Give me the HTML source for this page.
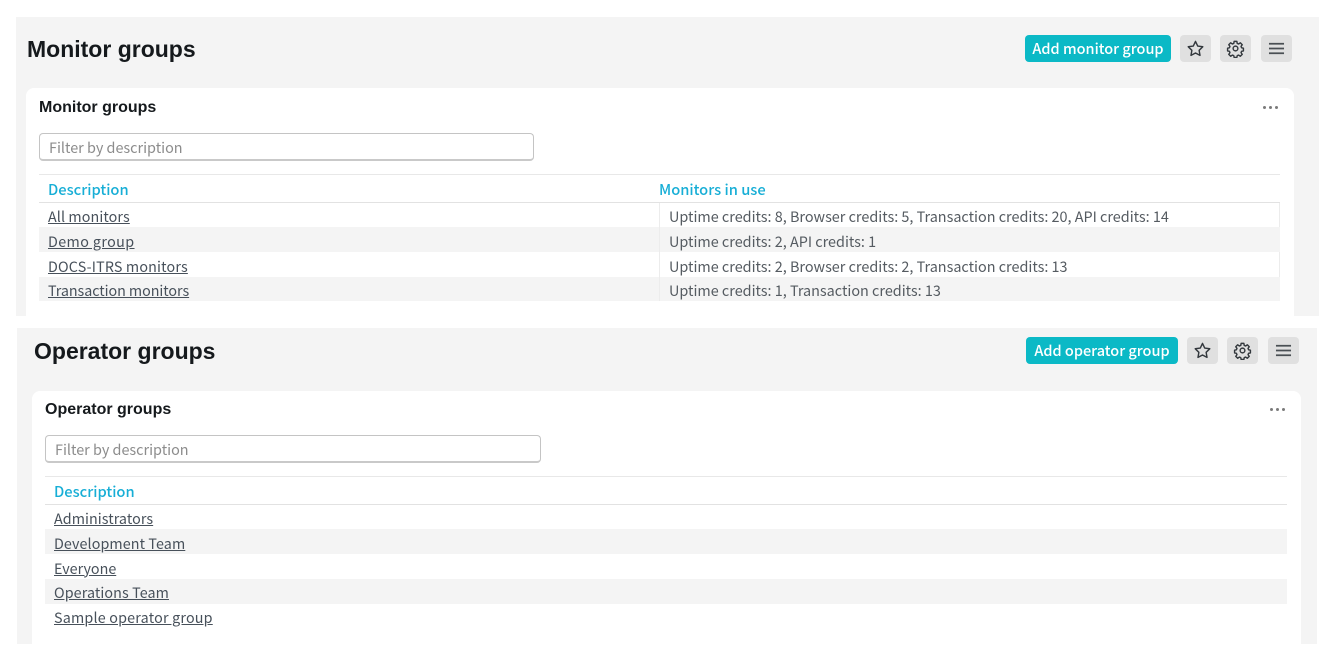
<!DOCTYPE html>
<html><head><meta charset="utf-8"><style>
html,body{margin:0;padding:0;background:#fff}
body{width:1336px;height:661px;position:relative;overflow:hidden;font-family:"Noto Sans CJK JP","Liberation Sans",sans-serif}
div,a,span{position:absolute;white-space:nowrap}
.panel{background:#f4f4f4}
.card{background:#fff;border-radius:8px 8px 0 0}
h1,h2{position:absolute;margin:0;font-family:"Liberation Sans",sans-serif;font-weight:700;color:#15191c;white-space:nowrap}
h1{font-size:23px;line-height:30px}
h2{font-size:16px;line-height:20px}
.add{background:#0bb9c6;color:#fff;border-radius:4px;height:27px;line-height:27px;text-align:center;font-size:14.5px;font-weight:500}
.ib{background:#e0e0e0;border-radius:4px;width:31px;height:27px}
.ib svg{position:absolute;left:6px;top:4px}
.filter{box-sizing:border-box;height:28px;width:496px;background:#fff;border:1px solid #c4c4c4;border-bottom:2px solid #c9c9c9;border-radius:4px;color:#8c8c8c;font-size:14.4px;line-height:27px;padding-left:9px}
.line{height:1px;background:#e8e8e8}
.th{color:#17aed6;font-size:14.7px;line-height:20px;font-weight:500}
.row{height:25px}
.sh{background:#f4f4f4}
a{color:#47505a;text-decoration:underline;font-size:14.3px;line-height:20px}
.t{color:#555b61;font-size:14.4px;line-height:20px}
.dots{width:16px;height:4px}
.dots i{position:absolute;top:0;width:3px;height:3px;border-radius:50%;background:#7a7a7a}
</style></head><body>

<div class="panel" style="left:16px;top:17px;width:1303px;height:299px"></div>
<div class="card" style="left:26px;top:88px;width:1268px;height:228px"></div>
<h1 style="left:27px;top:34px">Monitor groups</h1>
<div class="add" style="left:1025px;top:35px;width:146px">Add monitor group</div>
<div class="ib" style="left:1180px;top:35px"><svg width="19" height="19" viewBox="0 0 24 24" fill="none" stroke="#33383d" stroke-width="1.8" stroke-linejoin="round"><path d="M12 3l2.8 5.9 6.4.9-4.6 4.5 1.1 6.4L12 17.7l-5.7 3 1.1-6.4-4.6-4.5 6.4-.9z"/></svg></div>
<div class="ib" style="left:1220px;top:35px"><svg width="19" height="19" viewBox="0 0 24 24" fill="none" stroke="#33383d" stroke-width="1.8" stroke-linejoin="round"><circle cx="12" cy="12" r="3"/><path d="M10.3 3h3.4l.5 2.6 1.7.7 2.2-1.5 2.4 2.4-1.5 2.2.7 1.7 2.3.5v3.4l-2.3.5-.7 1.7 1.5 2.2-2.4 2.4-2.2-1.5-1.7.7-.5 2.3h-3.4l-.5-2.3-1.7-.7-2.2 1.5-2.4-2.4 1.5-2.2-.7-1.7-2.3-.5v-3.4l2.3-.5.7-1.7-1.5-2.2 2.4-2.4 2.2 1.5 1.7-.7z"/></svg></div>
<div class="ib" style="left:1261px;top:35px"><svg width="19" height="19" viewBox="0 0 24 24" fill="none" stroke="#4a4f54" stroke-width="2.2"><path d="M2.5 6h19M2.5 12h19M2.5 18h19"/></svg></div>
<h2 style="left:39px;top:98px">Monitor groups</h2>
<div class="dots" style="left:1263px;top:106px"><i style="left:0"></i><i style="left:6px"></i><i style="left:12px"></i></div>
<div class="filter" style="left:39px;top:133px;width:495px">Filter by description</div>
<div class="line" style="left:39px;top:174px;width:1241px"></div>
<div class="th" style="left:48px;top:180px">Description</div>
<div class="th" style="left:659px;top:180px">Monitors in use</div>
<div class="line" style="left:39px;top:202px;width:1241px;background:#e2e2e2"></div>
<div class="row sh" style="left:39px;top:227px;width:1241px"></div>
<div class="row sh" style="left:39px;top:277px;width:1241px;height:24px"></div>
<div style="left:659px;top:203px;width:1px;height:98px;background:#ececec"></div>
<div style="left:1279px;top:203px;width:1px;height:24px;background:#ececec"></div>
<div style="left:1279px;top:252px;width:1px;height:25px;background:#ececec"></div>
<a style="left:48px;top:207px;letter-spacing:.1px">All monitors</a>
<a style="left:48px;top:232px;letter-spacing:.4px">Demo group</a>
<a style="left:48px;top:257px;letter-spacing:.17px">DOCS-ITRS monitors</a>
<a style="left:48px;top:281px;letter-spacing:-.05px">Transaction monitors</a>
<div class="t" style="left:669px;top:207px">Uptime credits: 8, Browser credits: 5, Transaction credits: 20, API credits: 14</div>
<div class="t" style="left:669px;top:232px">Uptime credits: 2, API credits: 1</div>
<div class="t" style="left:669px;top:257px">Uptime credits: 2, Browser credits: 2, Transaction credits: 13</div>
<div class="t" style="left:669px;top:281px">Uptime credits: 1, Transaction credits: 13</div>

<div class="panel" style="left:17px;top:328px;width:1300px;height:316px"></div>
<div class="card" style="left:32px;top:391px;width:1269px;height:253px"></div>
<h1 style="left:34px;top:336px">Operator groups</h1>
<div class="add" style="left:1026px;top:337px;width:152px">Add operator group</div>
<div class="ib" style="left:1187px;top:337px"><svg width="19" height="19" viewBox="0 0 24 24" fill="none" stroke="#33383d" stroke-width="1.8" stroke-linejoin="round"><path d="M12 3l2.8 5.9 6.4.9-4.6 4.5 1.1 6.4L12 17.7l-5.7 3 1.1-6.4-4.6-4.5 6.4-.9z"/></svg></div>
<div class="ib" style="left:1227px;top:337px"><svg width="19" height="19" viewBox="0 0 24 24" fill="none" stroke="#33383d" stroke-width="1.8" stroke-linejoin="round"><circle cx="12" cy="12" r="3"/><path d="M10.3 3h3.4l.5 2.6 1.7.7 2.2-1.5 2.4 2.4-1.5 2.2.7 1.7 2.3.5v3.4l-2.3.5-.7 1.7 1.5 2.2-2.4 2.4-2.2-1.5-1.7.7-.5 2.3h-3.4l-.5-2.3-1.7-.7-2.2 1.5-2.4-2.4 1.5-2.2-.7-1.7-2.3-.5v-3.4l2.3-.5.7-1.7-1.5-2.2 2.4-2.4 2.2 1.5 1.7-.7z"/></svg></div>
<div class="ib" style="left:1268px;top:337px"><svg width="19" height="19" viewBox="0 0 24 24" fill="none" stroke="#4a4f54" stroke-width="2.2"><path d="M2.5 6h19M2.5 12h19M2.5 18h19"/></svg></div>
<h2 style="left:45px;top:400px">Operator groups</h2>
<div class="dots" style="left:1270px;top:408px"><i style="left:0"></i><i style="left:6px"></i><i style="left:12px"></i></div>
<div class="filter" style="left:45px;top:435px">Filter by description</div>
<div class="line" style="left:45px;top:476px;width:1242px"></div>
<div class="th" style="left:54px;top:482px">Description</div>
<div class="line" style="left:45px;top:504px;width:1242px;background:#e2e2e2"></div>
<div class="row sh" style="left:45px;top:529px;width:1242px"></div>
<div class="row sh" style="left:45px;top:579px;width:1242px"></div>
<a style="left:54px;top:509px;letter-spacing:.07px">Administrators</a>
<a style="left:54px;top:534px;letter-spacing:.1px">Development Team</a>
<a style="left:54px;top:559px">Everyone</a>
<a style="left:54px;top:583px;letter-spacing:.1px">Operations Team</a>
<a style="left:54px;top:608px;letter-spacing:.2px">Sample operator group</a>
</body></html>
